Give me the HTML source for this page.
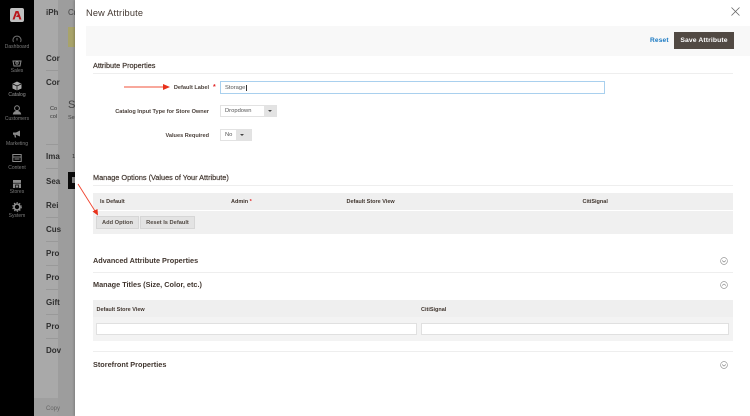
<!DOCTYPE html>
<html>
<head>
<meta charset="utf-8">
<style>
html,body{margin:0;padding:0;width:750px;height:416px;overflow:hidden;background:#fff;font-family:"Liberation Sans",sans-serif;color:#41362f}
.a{position:absolute;white-space:nowrap}
.b{font-weight:bold}
#side{position:absolute;left:0;top:0;width:34px;height:416px;background:#000}
.nav{position:absolute;left:0;width:34px;text-align:center;font-size:5px;color:#7c7c7c}
.ic{position:absolute;left:12px;width:10px;height:10px}
#bg{position:absolute;left:34px;top:0;width:24px;height:416px;background:#a9a9a9}
#bg2{position:absolute;left:58px;top:0;width:17px;height:416px;background:#9d9d9d}
.bgt{font-size:8px;font-weight:bold;color:#2e2e2e}
.ln{position:absolute;left:46px;width:12px;height:1px;background:#999}
#modal{position:absolute;left:75px;top:0;width:675px;height:416px;background:#fff;box-shadow:-1px 0 2px rgba(0,0,0,.2)}
.h{font-size:7.3px;font-weight:bold;color:#41362f}
.h2{font-size:7.3px;color:#41362f;-webkit-text-stroke:.2px #41362f}
.hr{position:absolute;height:1px;background:#eeeeee;left:93px;width:640px}
.lab{font-size:5.6px;font-weight:bold;color:#4a403a;text-align:right;position:absolute;white-space:nowrap;right:541px}
.sel{position:absolute;background:#fff;border:1px solid #e2e2e2;height:12px;box-sizing:border-box;font-size:5.8px;color:#555;line-height:11px;padding-left:4px}
.arr{position:absolute;top:0;right:0;height:10px;background:#e3e3e3;width:12px}
.arr:after{content:"";position:absolute;left:4px;top:4px;border-left:2px solid transparent;border-right:2px solid transparent;border-top:2px solid #444}
.btn{position:absolute;background:#e3e3e3;border:1px solid #d6d6d6;box-sizing:border-box;height:13px;font-size:5.7px;font-weight:bold;color:#514943;text-align:center;line-height:12.5px}
.th{font-size:5.5px;font-weight:bold;color:#41362f;position:absolute;white-space:nowrap}
.col{position:absolute;left:719.5px;width:8px;height:8px}
</style>
</head>
<body>
<div id="bg"></div>
<div id="bg2"></div>
<div class="a bgt" style="left:46px;top:8px">iPh</div>
<div class="a" style="left:68px;top:8px;font-size:8px;color:#444">Cr</div>
<div class="a" style="left:68px;top:27px;width:7px;height:20px;background:#a8a36a"></div>
<div class="a bgt" style="left:46px;top:54px">Cor</div>
<div class="a bgt" style="left:46px;top:78px">Cor</div>
<div class="a" style="left:50px;top:105px;font-size:5.5px;line-height:8px;color:#333">Co<br>col</div>
<div class="a" style="left:68px;top:99px;font-size:11px;color:#444">St</div>
<div class="a" style="left:68px;top:115px;font-size:5.5px;color:#444">Sel</div>
<div class="a" style="left:72px;top:154px;font-size:5.5px;color:#333">1</div>
<div class="a bgt" style="left:46px;top:152px">Ima</div>
<div class="a bgt" style="left:46px;top:177px">Sea</div>
<div class="a" style="left:68px;top:172px;width:7px;height:17px;background:#0a0a0a"></div>
<div class="a" style="left:72px;top:177px;width:3px;height:6px;background:#888"></div>
<div class="a bgt" style="left:46px;top:201px">Rei</div>
<div class="a bgt" style="left:46px;top:225px">Cus</div>
<div class="a bgt" style="left:46px;top:249px">Pro</div>
<div class="a bgt" style="left:46px;top:273px">Pro</div>
<div class="a bgt" style="left:46px;top:298px">Gift</div>
<div class="a bgt" style="left:46px;top:322px">Pro</div>
<div class="a bgt" style="left:46px;top:346px">Dov</div>
<div class="ln" style="top:70px"></div><div class="ln" style="top:144px"></div><div class="ln" style="top:168px"></div><div class="ln" style="top:217px"></div><div class="ln" style="top:241px"></div><div class="ln" style="top:265px"></div><div class="ln" style="top:289px"></div><div class="ln" style="top:314px"></div><div class="ln" style="top:338px"></div>
<div class="a" style="left:34px;top:398px;width:24px;height:18px;background:#9f9f9f"></div>
<div class="a" style="left:46px;top:406px;font-size:6px;color:#666">Copy</div>

<div id="side">
<div class="a" style="left:10px;top:8px;width:14px;height:14px;background:#c0c0c0;border-radius:2px"></div>
<svg class="a" style="left:12px;top:10px" width="10" height="10" viewBox="0 0 10 10"><path d="M3.6 1H6.4L9.5 9.5H7.4L6.6 7H4L5 5.3H6L5 2.6L2.5 9.5H.5Z" fill="#b8161b"/></svg>

<svg class="ic" style="top:34px" viewBox="0 0 10 10" fill="none" stroke="#707070" stroke-width="1"><path d="M1.5 8A4 4 0 1 1 8.5 8"/><path d="M5 6.5V4"/></svg>
<div class="nav" style="top:44px">Dashboard</div>
<svg class="ic" style="top:58px" viewBox="0 0 10 10" fill="none" stroke="#8a8a8a" stroke-width="1"><path d="M1 3H9L8 8H2Z"/><circle cx="5" cy="5" r="1.2"/></svg>
<div class="nav" style="top:68px">Sales</div>
<svg class="ic" style="top:81px" viewBox="0 0 10 10"><path d="M5 .5L9.5 2.8V7.5L5 9.5L.5 7.5V2.8Z" fill="#a8a8a8"/><path d="M.8 3L5 5L9.2 3M5 5V9.5" stroke="#000" stroke-width=".7" fill="none"/></svg>
<div class="nav" style="top:92px;color:#989898">Catalog</div>
<svg class="ic" style="top:105px" viewBox="0 0 10 10"><circle cx="5" cy="3.2" r="2.4" fill="none" stroke="#8a8a8a"/><path d="M.8 9.5C1.2 6.5 3 6 5 6S8.8 6.5 9.2 9.5Z" fill="#8a8a8a"/></svg>
<div class="nav" style="top:116px">Customers</div>
<svg class="ic" style="top:129px" viewBox="0 0 10 10"><path d="M1 3.5H4L8 1.5V7.5L4 5.8H3.6L4.2 8.5H2.8L2.2 5.8H1Z" fill="#8a8a8a"/></svg>
<div class="nav" style="top:140.5px">Marketing</div>
<svg class="ic" style="top:153px" viewBox="0 0 10 10" fill="none" stroke="#8a8a8a"><rect x=".8" y="1.5" width="8.4" height="7"/><path d="M1 4H9M2.5 6H7.5" /></svg>
<div class="nav" style="top:165px">Content</div>
<svg class="ic" style="top:179px" viewBox="0 0 10 10"><path d="M1 1H9V9H1Z" fill="#8a8a8a"/><path d="M1 4.2H9M3.5 6V9H6.5V6Z" stroke="#000" stroke-width=".7" fill="none"/></svg>
<div class="nav" style="top:189px">Stores</div>
<svg class="ic" style="top:202px" viewBox="0 0 10 10"><circle cx="5" cy="5" r="3" fill="none" stroke="#949494" stroke-width="1.6"/><circle cx="5" cy="5" r="4.3" fill="none" stroke="#949494" stroke-width="1" stroke-dasharray="1.4 1.4"/></svg>
<div class="nav" style="top:213px">System</div>
</div>

<div id="modal"></div>
<div class="a" style="left:86px;top:7.5px;font-size:9.2px;color:#41362f;letter-spacing:.2px">New Attribute</div>
<svg class="a" style="left:731px;top:7px" width="9" height="9" viewBox="0 0 9 9"><path d="M.5.5L8.5 8.5M8.5.5L.5 8.5" stroke="#666" stroke-width=".8"/></svg>

<div class="a" style="left:86px;top:26px;width:664px;height:30px;background:#f8f8f8"></div>
<div class="a b" style="left:650px;top:36.5px;font-size:6.6px;color:#1979c3;letter-spacing:.15px">Reset</div>
<div class="a b" style="left:674px;top:32px;width:60px;height:17px;background:#514943;color:#fff;font-size:6.8px;line-height:17px;text-align:center;letter-spacing:.1px">Save Attribute</div>

<div class="a h2" style="left:93px;top:60.5px">Attribute Properties</div>
<div class="hr" style="top:73px"></div>

<svg class="a" style="left:122px;top:82px" width="50" height="10" viewBox="0 0 50 10"><path d="M2 5H42" stroke="#f0523a" stroke-width="1"/><path d="M41 2L48 5L41 8Z" fill="#e8321c"/></svg>
<div class="lab" style="top:84.5px">Default Label</div>
<div class="a" style="left:213px;top:84px;color:#e22626;font-size:7px;font-weight:bold">*</div>
<div class="a" style="left:220px;top:80.5px;width:385px;height:13px;box-sizing:border-box;border:1px solid #a9d0ee;background:#fff;font-size:5.8px;color:#555;line-height:12px;padding-left:4px">Storage<span style="border-left:.6px solid #333;margin-left:.3px"></span></div>

<div class="lab" style="top:108.5px">Catalog Input Type for Store Owner</div>
<div class="sel" style="left:220px;top:105px;width:57px">Dropdown<div class="arr"></div></div>
<div class="lab" style="top:132.5px">Values Required</div>
<div class="sel" style="left:220px;top:129px;width:32px">No<div class="arr" style="width:15px"></div></div>

<div class="a h2" style="left:93px;top:173px">Manage Options (Values of Your Attribute)</div>
<div class="hr" style="top:185px"></div>

<div class="a" style="left:92.5px;top:192.5px;width:640.5px;height:17px;background:#efefef"></div>
<div class="a" style="left:92.5px;top:210.5px;width:640.5px;height:23px;background:#f0f0f0"></div>
<div class="th" style="left:100px;top:198.5px">Is Default</div>
<div class="th" style="left:231px;top:198.5px">Admin <span style="color:#e22626">*</span></div>
<div class="th" style="left:346.5px;top:198.5px">Default Store View</div>
<div class="th" style="left:582.5px;top:198.5px">CitiSignal</div>
<div class="btn" style="left:96px;top:215.5px;width:43px">Add Option</div>
<div class="btn" style="left:140px;top:215.5px;width:55px">Reset Is Default</div>

<svg class="a" style="left:76px;top:182px" width="26" height="36" viewBox="0 0 26 36"><path d="M2 2L19 29" stroke="#f0432e" stroke-width=".9"/><path d="M16.5 29.5L21.5 27L22 33.5Z" fill="#e8321c"/></svg>

<div class="a h" style="left:93px;top:255.5px">Advanced Attribute Properties</div>
<div class="hr" style="top:272px"></div>
<svg class="col" style="top:256.5px" viewBox="0 0 8 8" fill="none" stroke="#888" stroke-width=".6"><circle cx="4" cy="4" r="3.4"/><path d="M2 3.5L4 5L6 3.5" stroke-width=".7"/></svg>

<div class="a h" style="left:93px;top:279.5px">Manage Titles (Size, Color, etc.)</div>
<svg class="col" style="top:281px" viewBox="0 0 8 8" fill="none" stroke="#888" stroke-width=".6"><circle cx="4" cy="4" r="3.4"/><path d="M2 4.5L4 3L6 4.5" stroke-width=".7"/></svg>

<div class="a" style="left:92.5px;top:300px;width:640.5px;height:17px;background:#efefef"></div>
<div class="a" style="left:92.5px;top:317px;width:640.5px;height:24px;background:#f3f3f3"></div>
<div class="th" style="left:96.5px;top:306.5px">Default Store View</div>
<div class="th" style="left:421px;top:306.5px">CitiSignal</div>
<div class="a" style="left:96px;top:322.5px;width:321px;height:12px;box-sizing:border-box;background:#fff;border:1px solid #e0e0e0"></div>
<div class="a" style="left:421px;top:322.5px;width:308px;height:12px;box-sizing:border-box;background:#fff;border:1px solid #e0e0e0"></div>

<div class="hr" style="top:351px"></div>
<div class="a h" style="left:93px;top:359.5px">Storefront Properties</div>
<svg class="col" style="top:360.5px" viewBox="0 0 8 8" fill="none" stroke="#888" stroke-width=".6"><circle cx="4" cy="4" r="3.4"/><path d="M2 3.5L4 5L6 3.5" stroke-width=".7"/></svg>
</body>
</html>
